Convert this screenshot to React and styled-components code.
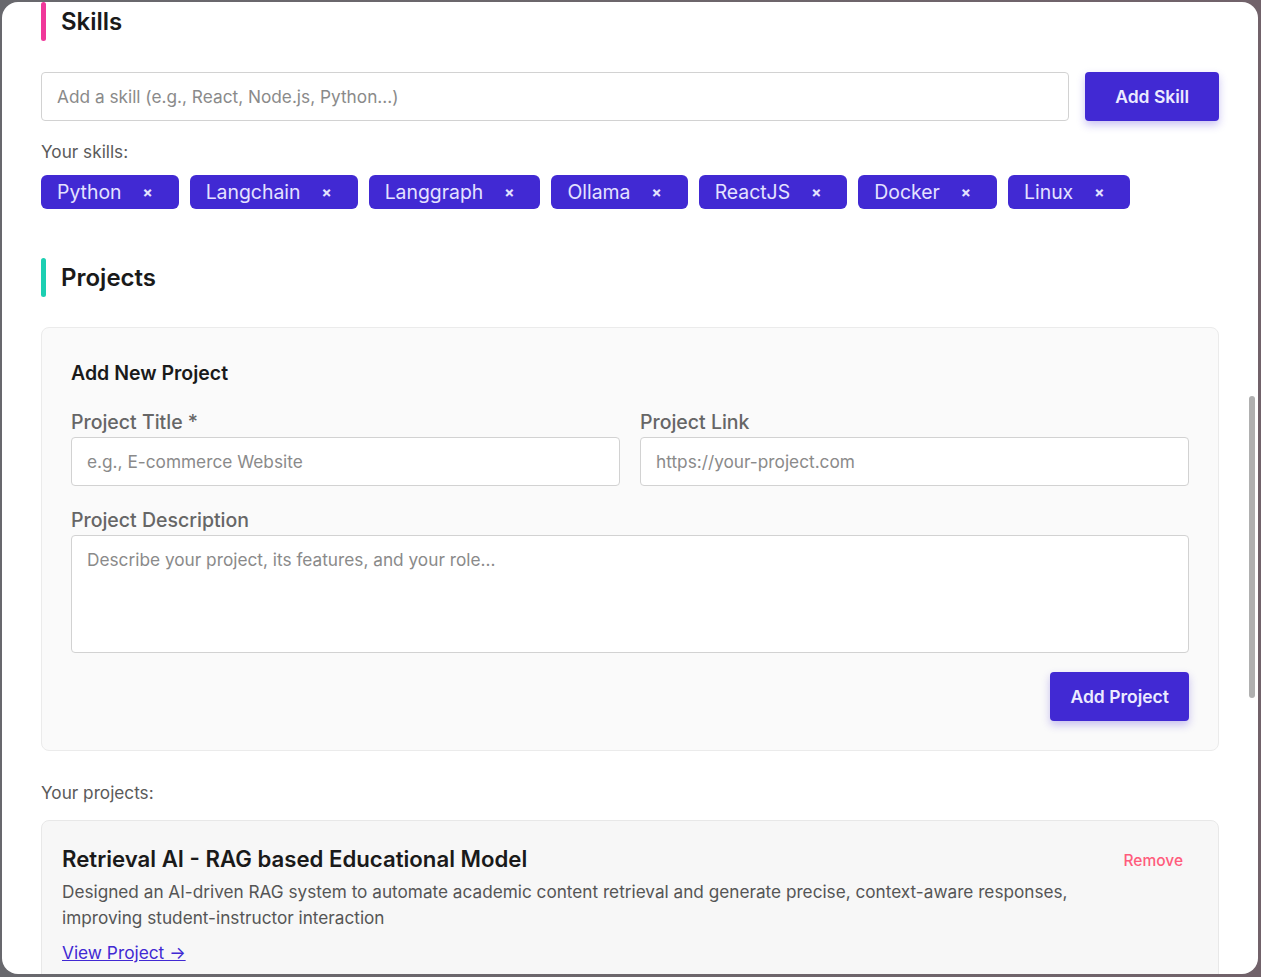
import React from "react";
import styled, { createGlobalStyle } from "styled-components";

const Global = createGlobalStyle`
  html, body { margin: 0; padding: 0; }
  body {
    background: linear-gradient(90deg, #68686d 0%, #6c666b 50%, #71626a 100%);
    font-family: Inter, "Noto Sans", sans-serif;
    height: 977px;
    overflow: hidden;
  }
  * { box-sizing: border-box; }
`;

const Backdrop = styled.div`
  padding: 2px;
  height: 977px;
`;

const Panel = styled.div`
  position: relative;
  width: 1256px;
  height: 972px;
  background: #ffffff;
  border-radius: 16px;
  overflow: hidden;
`;

const Content = styled.div`
  padding: 0 39px;
`;

const Thumb = styled.div`
  position: absolute;
  right: 3px;
  top: 394px;
  width: 6px;
  height: 302px;
  border-radius: 3px;
  background: #b0b0b0;
`;

const Section = styled.section`
  margin-bottom: ${(p) => p.$mb || 0}px;
`;

const Header = styled.div`
  display: flex;
  align-items: center;
  gap: 15px;
  height: 39px;
  margin-bottom: ${(p) => p.$mb || 30}px;
`;

const Bar = styled.span`
  width: 5px;
  height: 39px;
  border-radius: 3px;
  background: ${(p) => p.$color};
`;

const Title = styled.h2`
  margin: 0;
  font-size: 24px;
  font-weight: 600;
  color: #1a1a1a;
`;

const Row = styled.div`
  display: flex;
  gap: 16px;
  margin-bottom: 19px;
`;

const Input = styled.input`
  flex: ${(p) => (p.$grow ? 1 : "none")};
  height: 49px;
  border: 1px solid #d2d2d2;
  border-radius: 4px;
  padding: 0 15px;
  font-family: inherit;
  font-size: 17.25px;
  color: #333;
  background: #fff;
  outline: none;
  &::placeholder { color: #8a8a8a; }
`;

const TextArea = styled.textarea`
  display: block;
  width: 100%;
  height: 118px;
  border: 1px solid #d2d2d2;
  border-radius: 4px;
  padding: 12px 15px;
  font-family: inherit;
  font-size: 17.25px;
  line-height: 24px;
  resize: none;
  background: #fff;
  outline: none;
  &::placeholder { color: #8a8a8a; }
`;

const PrimaryButton = styled.button`
  height: 49px;
  padding: 0 ${(p) => p.$px || 20}px;
  border: none;
  border-radius: 4px;
  background: #4129d3;
  color: #ecebff;
  font-family: inherit;
  font-size: 17.5px;
  font-weight: 600;
  box-shadow: 0 4px 8px rgba(65, 41, 211, 0.28);
  cursor: pointer;
`;

const Caption = styled.div`
  font-size: 17.2px;
  line-height: 24px;
  color: #5a5a5a;
  margin-bottom: ${(p) => p.$mb || 0}px;
`;

const Tags = styled.div`
  display: flex;
  flex-wrap: wrap;
  gap: 11px;
`;

const Tag = styled.span`
  display: inline-flex;
  align-items: center;
  height: 34px;
  padding: 0 16px;
  border-radius: 6px;
  background: #4129d3;
  color: #e4e2ff;
  font-size: 19.4px;
`;

const TagClose = styled.button`
  margin-left: 11px;
  padding: 0 10px;
  border: none;
  background: none;
  color: #e4e2ff;
  font-family: inherit;
  font-size: 15px;
  font-weight: 700;
  cursor: pointer;
`;

const FormCard = styled.div`
  background: #fafafa;
  border: 1px solid #ebebeb;
  border-radius: 8px;
  padding: 31px 29px 29px;
  margin-bottom: 30px;
`;

const FormTitle = styled.h3`
  margin: 0 0 23px;
  font-size: 19.5px;
  line-height: 28px;
  font-weight: 600;
  color: #1a1a1a;
`;

const Grid = styled.div`
  display: grid;
  grid-template-columns: 1fr 1fr;
  column-gap: 20px;
  margin-bottom: 22px;
`;

const Field = styled.label`
  display: flex;
  flex-direction: column;
  gap: 3px;
`;

const Label = styled.span`
  font-size: 19.5px;
  line-height: 24px;
  font-weight: 500;
  color: #666;
`;

const Actions = styled.div`
  display: flex;
  justify-content: flex-end;
  margin-top: 19px;
`;

const ProjectCard = styled.div`
  display: flex;
  align-items: flex-start;
  gap: 20px;
  background: #f7f7f7;
  border: 1px solid #e8e8e8;
  border-radius: 8px;
  padding: 24px 23px 24px 20px;
`;

const ProjectBody = styled.div`
  flex: 1;
`;

const ProjectTitle = styled.h4`
  margin: 0 0 6px;
  font-size: 22.2px;
  line-height: 28px;
  font-weight: 600;
  color: #1a1a1a;
`;

const ProjectDesc = styled.p`
  margin: 0 0 10px;
  font-size: 17.2px;
  line-height: 26px;
  color: #555;
`;

const ProjectLink = styled.a`
  font-size: 17.3px;
  line-height: 24px;
  color: #4129d3;
  text-decoration: underline;
`;

const RemoveButton = styled.button`
  margin-top: 4px;
  padding: 2px 12px;
  border: none;
  background: none;
  color: #ff5c7c;
  font-family: inherit;
  font-size: 15.5px;
  font-weight: 500;
  cursor: pointer;
`;

const skills = ["Python", "Langchain", "Langgraph", "Ollama", "ReactJS", "Docker", "Linux"];

export default function App() {
  return (
    <>
      <Global />
      <Backdrop>
        <Panel>
          <Content>
            <Section $mb={49}>
              <Header $mb={31}>
                <Bar $color="#f0389a" />
                <Title>Skills</Title>
              </Header>
              <Row>
                <Input $grow placeholder="Add a skill (e.g., React, Node.js, Python...)" />
                <PrimaryButton $px={30}>Add Skill</PrimaryButton>
              </Row>
              <Caption $mb={11}>Your skills:</Caption>
              <Tags>
                {skills.map((s) => (
                  <Tag key={s}>
                    {s}
                    <TagClose>×</TagClose>
                  </Tag>
                ))}
              </Tags>
            </Section>

            <Section>
              <Header>
                <Bar $color="#1ccfb2" />
                <Title>Projects</Title>
              </Header>
              <FormCard>
                <FormTitle>Add New Project</FormTitle>
                <Grid>
                  <Field>
                    <Label>Project Title *</Label>
                    <Input placeholder="e.g., E-commerce Website" />
                  </Field>
                  <Field>
                    <Label>Project Link</Label>
                    <Input placeholder="https://your-project.com" />
                  </Field>
                </Grid>
                <Field>
                  <Label>Project Description</Label>
                  <TextArea placeholder="Describe your project, its features, and your role..." />
                </Field>
                <Actions>
                  <PrimaryButton $px={20}>Add Project</PrimaryButton>
                </Actions>
              </FormCard>
              <Caption $mb={15}>Your projects:</Caption>
              <ProjectCard>
                <ProjectBody>
                  <ProjectTitle>Retrieval AI - RAG based Educational Model</ProjectTitle>
                  <ProjectDesc>
                    Designed an AI-driven RAG system to automate academic content retrieval and generate precise, context-aware responses, improving student-instructor interaction
                  </ProjectDesc>
                  <ProjectLink href="#">View Project →</ProjectLink>
                </ProjectBody>
                <RemoveButton>Remove</RemoveButton>
              </ProjectCard>
            </Section>
          </Content>
          <Thumb />
        </Panel>
      </Backdrop>
    </>
  );
}
